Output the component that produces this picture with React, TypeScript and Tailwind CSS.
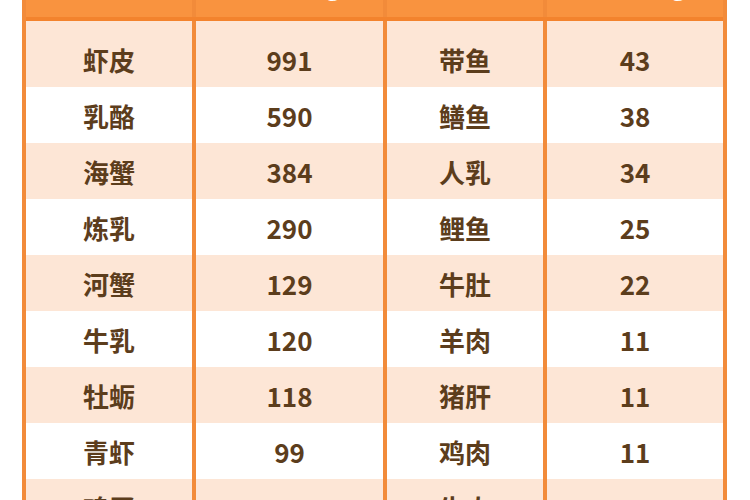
const rows: [string, string, string, string][] = [
  ["虾皮", "991", "带鱼", "43"],
  ["乳酪", "590", "鳝鱼", "38"],
  ["海蟹", "384", "人乳", "34"],
  ["炼乳", "290", "鲤鱼", "25"],
  ["河蟹", "129", "牛肚", "22"],
  ["牛乳", "120", "羊肉", "11"],
  ["牡蛎", "118", "猪肝", "11"],
  ["青虾", "99", "鸡肉", "11"],
  ["鸡蛋", "55", "牛肉", "7"],
];

const widths = ["w-[170px]", "w-[191px]", "w-[160px]", "w-[176px]"];

function Cell({ text, index, first }: { text: string; index: number; first: boolean }) {
  return (
    <div
      className={`${widths[index]} flex items-center justify-center ${first ? "pt-[10px]" : ""} ${
        index < 3 ? "border-r-4 border-[#f28b3a]" : ""
      }`}
    >
      {text}
    </div>
  );
}

export default function App() {
  return (
    <div className="h-[500px] w-[750px] overflow-hidden bg-white pl-[22px] font-['Noto_Sans_CJK_SC','Noto_Sans',sans-serif]">
      <div className="w-[705px] border-x-4 border-[#f28b3a]">
        {/* Header - cropped by the screenshot, only the descenders peek out */}
        <div className="flex h-[21px] border-b-4 border-[#f3832d] bg-[#f9933f] text-[26px] font-bold leading-[26px] text-white">
          {["食物", "含量(mg)", "食物", "含量(mg)"].map((h, i) => (
            <div
              key={i}
              className={`${widths[i]} flex justify-center overflow-hidden ${
                i < 3 ? "border-r-4 border-[#f28b3a]" : ""
              }`}
            >
              <span className={`-mt-[29px] block whitespace-nowrap ${i % 2 ? "pl-[10px]" : ""}`}>{h}</span>
            </div>
          ))}
        </div>

        {/* Body */}
        <div className="text-[26px] font-bold text-[#5c3d1c]">
          {rows.map((row, r) => (
            <div
              key={r}
              className={`flex ${r === 0 ? "h-[66px]" : "h-[56px]"} ${
                r % 2 === 0 ? "bg-[#fde6d6]" : "bg-white"
              }`}
            >
              {row.map((cell, c) => (
                <Cell key={c} text={cell} index={c} first={r === 0} />
              ))}
            </div>
          ))}
        </div>
      </div>
    </div>
  );
}
